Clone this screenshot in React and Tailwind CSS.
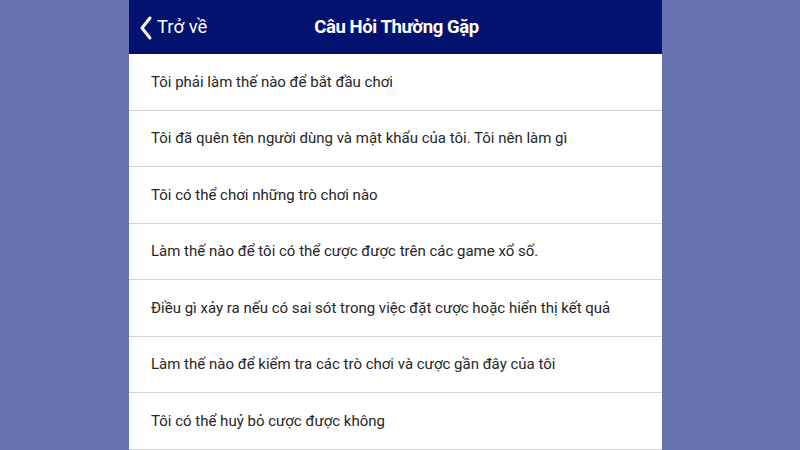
import React from "react";

const questions = [
  "Tôi phải làm thế nào để bắt đầu chơi",
  "Tôi đã quên tên người dùng và mật khẩu của tôi. Tôi nên làm gì",
  "Tôi có thể chơi những trò chơi nào",
  "Làm thế nào để tôi có thể cược được trên các game xổ số.",
  "Điều gì xảy ra nếu có sai sót trong việc đặt cược hoặc hiển thị kết quả",
  "Làm thế nào để kiểm tra các trò chơi và cược gần đây của tôi",
  "Tôi có thể huỷ bỏ cược được không",
];

export default function App() {
  return (
    <div
      className="w-[800px] h-[450px] overflow-hidden bg-[#6872b0] flex"
      style={{ fontFamily: "Roboto, 'Noto Sans', sans-serif" }}
    >
      <div className="w-[533px] ml-[129px] bg-white flex flex-col">
        <div className="h-[54px] shrink-0 bg-[#04126f] relative flex items-center justify-center">
          <div className="absolute left-[10px] top-0 h-full flex items-center text-white">
            <svg width="14" height="26" viewBox="0 0 14 26" className="mr-[4px] mt-[2px]">
              <path d="M11 3 L3 13 L11 23" fill="none" stroke="white" strokeWidth="3" strokeLinecap="round" strokeLinejoin="round" />
            </svg>
            <span className="text-[18.5px] leading-none">Trở về</span>
          </div>
          <span className="text-white font-bold text-[18.5px] tracking-[-0.4px] leading-none pl-[2px]">
            Câu Hỏi Thường Gặp
          </span>
        </div>
        {questions.map((q) => (
          <div
            key={q}
            className="h-[56.5px] shrink-0 flex items-center pl-[22px] border-b border-[#d4d4d4] text-[15px] text-[#262626]"
          >
            {q}
          </div>
        ))}
      </div>
    </div>
  );
}
